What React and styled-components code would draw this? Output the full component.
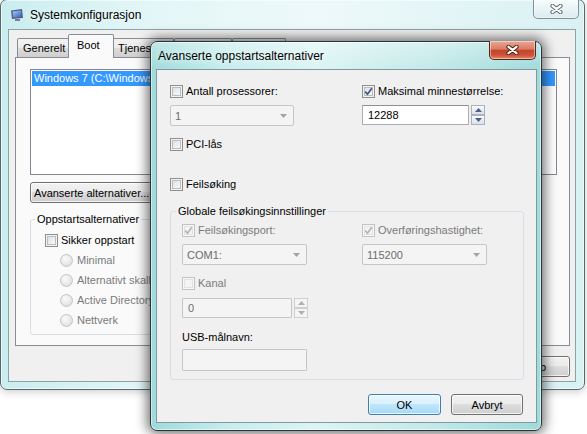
import React from 'react';
import styled, { createGlobalStyle } from 'styled-components';

const GlobalStyle = createGlobalStyle`
  html, body {
    margin: 0;
    padding: 0;
    background: #fff;
  }
  body {
    font-family: "Liberation Sans", Arial, sans-serif;
    font-size: 11px;
    color: #000;
  }
  * {
    box-sizing: border-box;
  }
`;

const activeGlass = `
  linear-gradient(180deg, rgba(255,255,255,0.35) 0px, rgba(255,255,255,0) 28px),
  linear-gradient(90deg, #9fdada 0%, #c4ecec 18%, #dcf4f4 42%, #c2e9e9 72%, #a0dada 100%)
`;
const inactiveGlass = `
  linear-gradient(90deg, #c9edef 0%, #e3f6f7 25%, #eef9fa 55%, #d8f1f3 100%)
`;

const Desktop = styled.div`
  position: relative;
  width: 587px;
  height: 434px;
  overflow: hidden;
  background: #fff;
`;

// windows sit on the desktop at their own coordinates
const Window = styled.div`
  position: absolute;
  z-index: ${p => p.$z};
  left: ${p => p.$x}px;
  top: ${p => p.$y}px;
  width: ${p => p.$w}px;
  height: ${p => p.$h}px;
  display: flex;
  flex-direction: column;
  padding: ${p => p.$pad};
  border: 1px solid ${p => (p.$active ? '#26363a' : '#566a6e')};
  border-radius: 7px;
  background: ${p => (p.$active ? activeGlass : inactiveGlass)};
  box-shadow: ${p => (p.$active ? '0 0 12px 3px rgba(0,0,0,0.55)' : '0 2px 8px rgba(0,0,0,0.2)')},
    inset 0 0 0 1px rgba(255,255,255,0.55);
`;

const TitleBar = styled.div`
  flex: none;
  height: ${p => p.$h}px;
  display: flex;
  align-items: center;
  padding-left: ${p => p.$pl}px;
`;

const TitleText = styled.span`
  font-size: 12px;
  color: #000;
  margin-left: ${p => p.$ml || 0}px;
  text-shadow: 0 0 6px rgba(255,255,255,0.95);
`;

const CloseButton = styled.div`
  align-self: flex-start;
  margin-left: auto;
  margin-top: ${p => p.$mt}px;
  margin-right: ${p => p.$mr}px;
  width: ${p => p.$w}px;
  height: 19px;
  display: flex;
  align-items: center;
  justify-content: center;
  border: 1px solid ${p => (p.$inactive ? '#7d9196' : '#5a2418')};
  border-top: none;
  border-radius: 0 0 5px 5px;
  background: ${p =>
    p.$inactive
      ? 'linear-gradient(180deg, #f6fcfd 0%, #e9f4f6 50%, #dcebee 100%)'
      : 'linear-gradient(180deg, #e8a796 0%, #db7b64 45%, #c4452d 52%, #cc5236 78%, #e2876a 100%)'};
  box-shadow: inset 0 0 0 1px rgba(255,255,255,0.45);
`;

const CloseGlyph = ({ outline }) => (
  <svg width="13" height="10" viewBox="0 0 13 10">
    <path d="M2.5 1.8 L10.5 8.2 M10.5 1.8 L2.5 8.2" stroke={outline} strokeWidth="4.2" strokeLinecap="round" />
    <path d="M2.5 1.8 L10.5 8.2 M10.5 1.8 L2.5 8.2" stroke="#fff" strokeWidth="2.3" strokeLinecap="round" />
  </svg>
);

const AppIcon = () => (
  <svg width="14" height="14" viewBox="0 0 14 14">
    <defs>
      <linearGradient id="scr" x1="0" y1="0" x2="1" y2="1">
        <stop offset="0" stopColor="#a9cdf7" />
        <stop offset="1" stopColor="#2c5cc0" />
      </linearGradient>
    </defs>
    <path d="M1 2.5 L12 1 L13 10 L2 11 Z" fill="#575c84" />
    <path d="M2.6 3.6 L11 2.6 L11.7 8.8 L3.3 9.6 Z" fill="url(#scr)" />
    <rect x="5" y="11" width="5" height="2" fill="#7a7e9c" />
  </svg>
);

/* ---------- generic controls ---------- */

const CheckRow = styled.div`
  display: flex;
  align-items: center;
  gap: 3px;
  height: 16px;
  margin-top: ${p => p.$mt || 0}px;
  white-space: nowrap;
  color: ${p => (p.$disabled ? '#7b7b7b' : '#000')};
`;

const Box = styled.span`
  flex: none;
  width: 13px;
  height: 13px;
  display: flex;
  align-items: center;
  justify-content: center;
  border: 1px solid ${p => (p.$disabled ? '#c3c3c3' : '#8e8f8f')};
  background: ${p =>
    p.$disabled ? '#f4f4f4' : 'linear-gradient(135deg, #d6d9dc 0%, #f0f1f2 60%, #fbfbfb 100%)'};
  box-shadow: inset 0 0 0 1px ${p => (p.$disabled ? '#f7f7f7' : '#f3f3f3')},
    inset 0 0 0 2px ${p => (p.$disabled ? '#e3e3e3' : '#b9bdc2')};
`;

const Check = ({ checked, disabled, children, mt }) => (
  <CheckRow $disabled={disabled} $mt={mt}>
    <Box $disabled={disabled}>
      {checked && (
        <svg width="9" height="9" viewBox="0 0 9 9">
          <path
            d="M1.2 4.6 L3.5 7.2 L7.8 1.2"
            fill="none"
            stroke={disabled ? '#b4b4b4' : '#3f5486'}
            strokeWidth="1.7"
          />
        </svg>
      )}
    </Box>
    <span>{children}</span>
  </CheckRow>
);

const RadioRow = styled.div`
  display: flex;
  align-items: center;
  gap: 4px;
  height: 16px;
  margin-left: 15px;
  margin-top: 4px;
  white-space: nowrap;
  color: #7b7b7b;
`;

const RadioDot = styled.span`
  flex: none;
  width: 13px;
  height: 13px;
  border-radius: 50%;
  border: 1px solid #c4c4c4;
  background: radial-gradient(circle at 40% 35%, #fbfbfb 0%, #e8e8e8 55%, #d4d4d4 100%);
`;

const Radio = ({ children }) => (
  <RadioRow>
    <RadioDot />
    <span>{children}</span>
  </RadioRow>
);

const ComboBox = styled.div`
  width: ${p => p.$w}px;
  height: 21px;
  display: flex;
  align-items: center;
  justify-content: space-between;
  padding: 0 6px 0 4px;
  border: 1px solid #c6c6c6;
  border-radius: 2px;
  background: #f4f4f4;
  color: #6d6d6d;
`;

const Arrow = ({ up, color = '#a3a3a3', w = 7 }) => (
  <svg width={w} height="4" viewBox={`0 0 ${w} 4`}>
    <path d={up ? `M0 4 L${w / 2} 0 L${w} 4 Z` : `M0 0 L${w} 0 L${w / 2} 4 Z`} fill={color} />
  </svg>
);

const Combo = ({ w, children }) => (
  <ComboBox $w={w}>
    <span>{children}</span>
    <Arrow />
  </ComboBox>
);

const SpinWrap = styled.div`
  display: flex;
  gap: 2px;
  margin-top: ${p => p.$mt || 0}px;
`;

const Field = styled.div`
  width: ${p => p.$w}px;
  height: ${p => p.$h || 20}px;
  margin-top: ${p => p.$mt || 0}px;
  display: flex;
  align-items: center;
  padding-left: 5px;
  border: 1px solid ${p => (p.$disabled ? '#c6c6c6' : '#abadb3')};
  border-top-color: ${p => (p.$disabled ? '#c6c6c6' : '#8e9095')};
  border-radius: 1px;
  background: ${p => (p.$disabled ? '#f4f4f4' : '#fff')};
  color: ${p => (p.$disabled ? '#6d6d6d' : '#000')};
`;

const SpinButtons = styled.div`
  display: flex;
  flex-direction: column;
`;

const SpinButton = styled.div`
  width: 14px;
  height: 10px;
  display: flex;
  align-items: center;
  justify-content: center;
  border: 1px solid ${p => (p.$disabled ? '#cfcfcf' : '#a9b3c0')};
  background: ${p =>
    p.$disabled ? '#f4f4f4' : 'linear-gradient(180deg, #fbfcfd 0%, #e9ecf0 50%, #dde2e8 100%)'};
`;

const Spin = ({ w, value, disabled, mt }) => {
  const c = disabled ? '#b0b0b0' : '#4a5f8c';
  return (
    <SpinWrap $mt={mt}>
      <Field $w={w} $disabled={disabled}>{value}</Field>
      <SpinButtons>
        <SpinButton $disabled={disabled}><Arrow up color={c} /></SpinButton>
        <SpinButton $disabled={disabled}><Arrow color={c} /></SpinButton>
      </SpinButtons>
    </SpinWrap>
  );
};

const Button = styled.div`
  flex: none;
  height: 21px;
  width: ${p => (p.$w ? `${p.$w}px` : 'auto')};
  padding: 0 3px;
  display: flex;
  align-items: center;
  justify-content: center;
  white-space: nowrap;
  border: 1px solid ${p => (p.$default ? '#3c7fb1' : '#707070')};
  border-radius: 3px;
  background: ${p =>
    p.$default
      ? 'linear-gradient(180deg, #eaf6fd 0%, #d9f0fc 50%, #bee6fd 50%, #a7d9f5 100%)'
      : 'linear-gradient(180deg, #f2f2f2 0%, #ebebeb 50%, #dddddd 50%, #cfcfcf 100%)'};
  box-shadow: inset 0 0 0 1px rgba(255,255,255,0.75);
`;

const Group = styled.fieldset`
  margin: ${p => p.$mt || 0}px ${p => p.$mr || 0}px 0 0;
  width: ${p => (p.$w ? `${p.$w}px` : 'auto')};
  padding: ${p => p.$pad};
  border: 1px solid #d5dfe5;
  border-radius: 3px;
  min-width: 0;
`;

const Legend = styled.legend`
  margin-left: ${p => p.$ml}px;
  padding: 0 2px;
  line-height: 16px;
  height: 16px;
  white-space: nowrap;
`;

const TwoCols = styled.div`
  display: grid;
  grid-template-columns: ${p => p.$col}px 1fr;
  row-gap: 6px;
  align-items: start;
`;

const Label = styled.div`
  height: 16px;
  line-height: 16px;
  margin-top: ${p => p.$mt || 0}px;
`;

/* ---------- background window (Systemkonfigurasjon) ---------- */

const BackClient = styled.div`
  flex: 1;
  display: flex;
  flex-direction: column;
  padding: 4px 5px 0 6px;
  border: 1px solid #8ea2a6;
  background: #f0f0f0;
`;

const TabStrip = styled.div`
  height: 23px;
  display: flex;
  align-items: flex-end;
  padding-left: 2px;
`;

const Tab = styled.div`
  flex: none;
  position: relative;
  width: ${p => p.$w}px;
  height: ${p => (p.$selected ? 24 : 19)}px;
  margin: 0 ${p => (p.$selected ? -2 : 0)}px ${p => (p.$selected ? -1 : 0)}px;
  z-index: ${p => (p.$selected ? 2 : 0)};
  display: flex;
  align-items: center;
  padding: 0 0 ${p => (p.$selected ? 3 : 0)}px ${p => (p.$selected ? 8 : 5)}px;
  white-space: nowrap;
  overflow: hidden;
  border: 1px solid #898c95;
  border-bottom: none;
  border-radius: 2px 2px 0 0;
  background: ${p =>
    p.$selected ? '#fafafa' : 'linear-gradient(180deg, #f2f2f2 0%, #ebebeb 50%, #dddddd 50%, #cfcfcf 100%)'};
`;

const TabPanel = styled.div`
  position: relative;
  z-index: 1;
  height: 289px;
  display: flex;
  flex-direction: column;
  align-items: flex-start;
  padding: 11px 12px 0 14px;
  border: 1px solid #898c95;
  background: #fafafa;
`;

const ListBox = styled.div`
  width: 527px;
  height: 106px;
  padding: 1px;
  border: 1px solid #828790;
  background: #fff;
`;

const ListItem = styled.div`
  height: 15px;
  line-height: 15px;
  padding-left: 2px;
  white-space: nowrap;
  overflow: hidden;
  background: ${p => (p.$selected ? '#3399ff' : 'transparent')};
  color: ${p => (p.$selected ? '#fff' : '#000')};
`;

const ButtonRow = styled.div`
  display: flex;
  gap: ${p => p.$gap}px;
  margin-top: ${p => p.$mt}px;
  justify-content: ${p => p.$justify || 'flex-start'};
  align-self: stretch;
  padding-right: ${p => p.$pr || 0}px;
`;

/* ---------- front dialog ---------- */

const FrontClient = styled.div`
  flex: 1;
  display: flex;
  flex-direction: column;
  padding: 13px 11px 0 13px;
  border: 1px solid #7f9aa0;
  background: #f0f0f0;
`;

export default function App() {
  return (
    <>
      <GlobalStyle />
      <Desktop>
        <Window $z={1} $x={0} $y={-1} $w={585} $h={391} $pad="0 8px 7px 7px">
          <TitleBar $h={29} $pl={2}>
            <AppIcon />
            <TitleText $ml={6}>Systemkonfigurasjon</TitleText>
            <CloseButton $inactive $w={46} $mt={0} $mr={-3}>
              <CloseGlyph outline="#5d6b70" />
            </CloseButton>
          </TitleBar>
          <BackClient>
            <TabStrip>
              <Tab $w={53}>Generelt</Tab>
              <Tab $w={46} $selected>Boot</Tab>
              <Tab $w={62}>Tjenester</Tab>
              <Tab $w={58}>Oppstart</Tab>
              <Tab $w={54}>Verktøy</Tab>
            </TabStrip>
            <TabPanel>
              <ListBox>
                <ListItem $selected>Windows 7 (C:\Windows) : Gjeldende operativsystem; Standard-OS</ListItem>
              </ListBox>
              <ButtonRow $gap={6} $mt={7}>
                <Button>Avanserte alternativer...</Button>
                <Button>Angi som standard</Button>
                <Button $w={72}>Slett</Button>
              </ButtonRow>
              <Group $w={270} $mt={8} $pad="5px 6px 6px 14px">
                <Legend $ml={-10}>Oppstartsalternativer</Legend>
                <Check>Sikker oppstart</Check>
                <Radio>Minimal</Radio>
                <Radio>Alternativt skall</Radio>
                <Radio>Active Directory-reparasjon</Radio>
                <Radio>Nettverk</Radio>
              </Group>
            </TabPanel>
            <ButtonRow $gap={7} $mt={10} $justify="flex-end">
              <Button $w={73}>OK</Button>
              <Button $w={73}>Avbryt</Button>
              <Button $w={73}>Bruk</Button>
              <Button $w={73}>Hjelp</Button>
            </ButtonRow>
          </BackClient>
        </Window>

        <Window $z={2} $active $x={150} $y={41} $w={392} $h={390} $pad="0 4px 7px 5px">
          <TitleBar $h={27} $pl={2}>
            <TitleText>Avanserte oppstartsalternativer</TitleText>
            <CloseButton $w={47} $mt={-1} $mr={1}>
              <CloseGlyph outline="#4a1d14" />
            </CloseButton>
          </TitleBar>
          <FrontClient>
            <TwoCols $col={192}>
              <Check>Antall prosessorer:</Check>
              <Check checked>Maksimal minnestørrelse:</Check>
              <Combo w={124}>1</Combo>
              <Spin w={107} value="12288" />
            </TwoCols>
            <Check mt={10}>PCI-lås</Check>
            <Check mt={24}>Feilsøking</Check>
            <Group $mt={11} $mr={1} $pad="3px 10px 8px 11px">
              <Legend $ml={-6}>Globale feilsøkingsinnstillinger</Legend>
              <TwoCols $col={180}>
                <Check checked disabled>Feilsøkingsport:</Check>
                <Check checked disabled>Overføringshastighet:</Check>
                <Combo w={125}>COM1:</Combo>
                <Combo w={125}>115200</Combo>
              </TwoCols>
              <Check disabled mt={10}>Kanal</Check>
              <Spin disabled w={110} value="0" mt={7} />
              <Label $mt={11}>USB-målnavn:</Label>
              <Field $disabled $w={125} $h={22} $mt={4} />
            </Group>
            <ButtonRow $gap={10} $mt={14} $justify="flex-end" $pr={2}>
              <Button $w={73} $default>OK</Button>
              <Button $w={72}>Avbryt</Button>
            </ButtonRow>
          </FrontClient>
        </Window>
      </Desktop>
    </>
  );
}
